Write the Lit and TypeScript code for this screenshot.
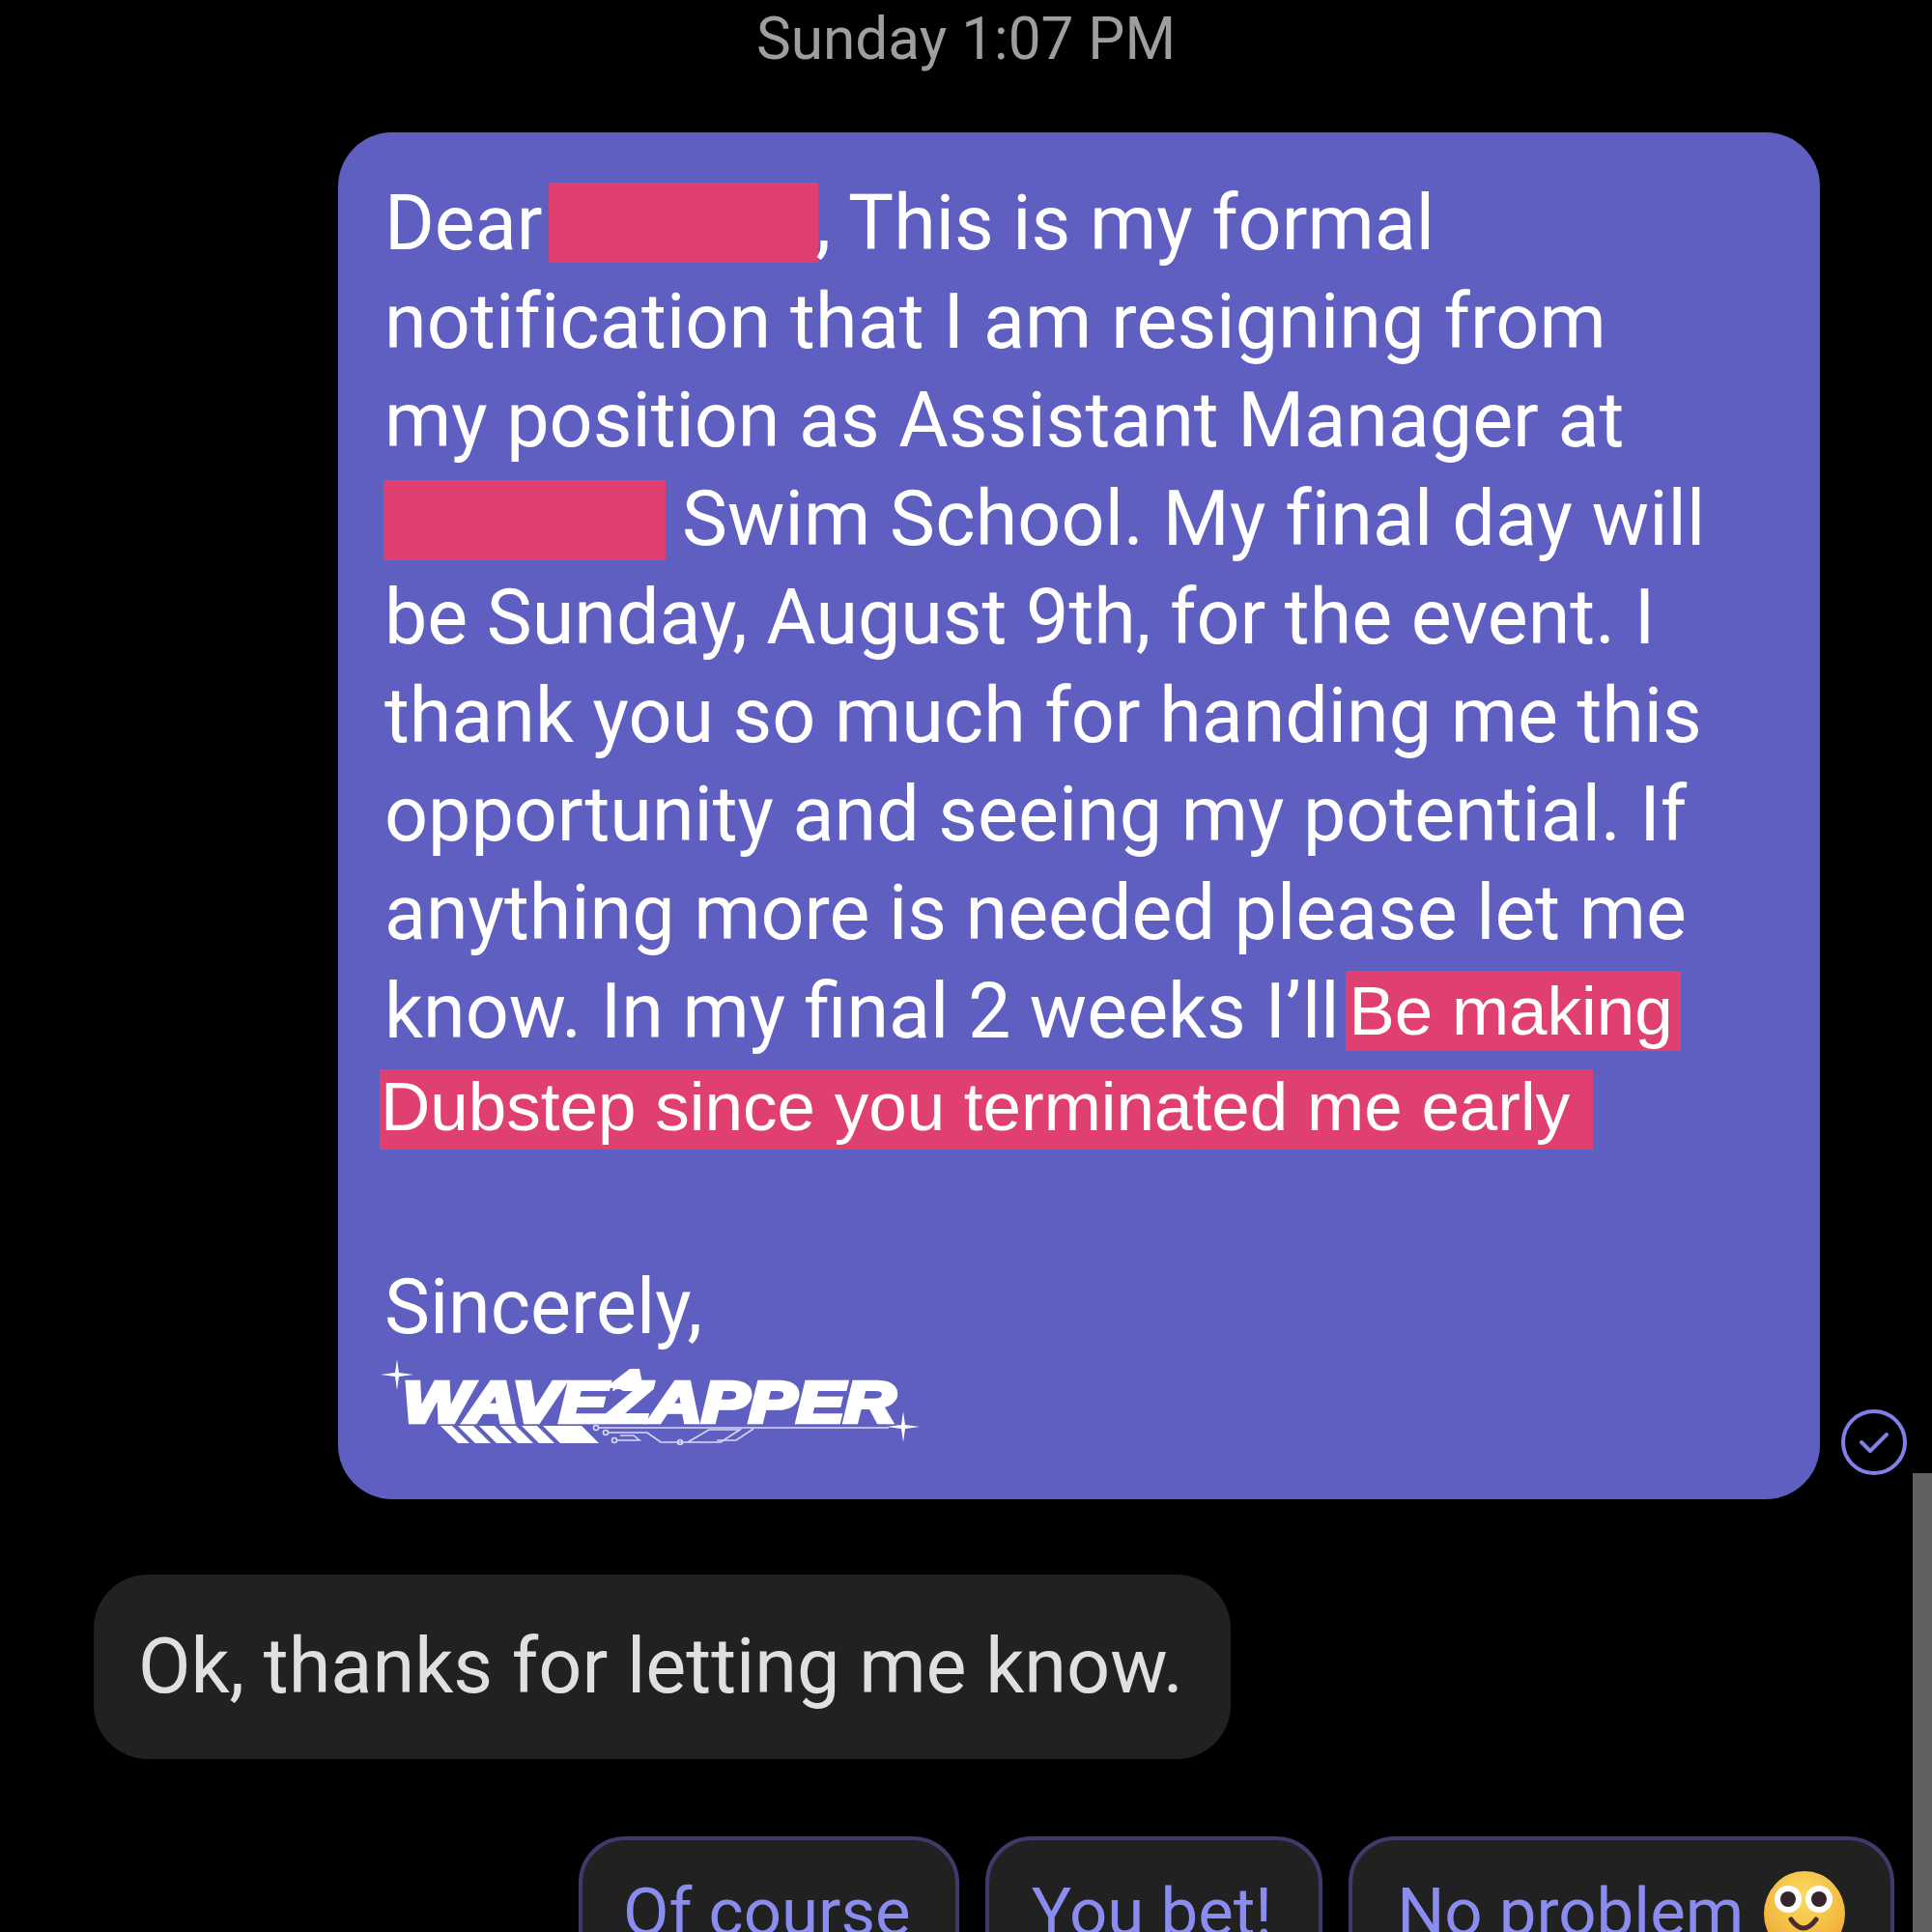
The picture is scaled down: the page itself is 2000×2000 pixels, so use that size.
import { LitElement, html, css, svg } from "lit";
import { customElement } from "lit/decorators.js";

const logo = svg`
  <svg class="logo" width="580" height="100" viewBox="0 0 580 100">
    <g fill="#fff">
      <text class="logo-word" x="27" y="65" textLength="510" lengthAdjust="spacingAndGlyphs">WAVEZAPPER</text>
      <polygon points="236,30 262,10 272,10 276,30" />
      <polygon points="66,69 78,69 96,87 84,87" />
      <polygon points="84,69 100,69 118,87 102,87" />
      <polygon points="106,69 122,69 140,87 124,87" />
      <polygon points="128,69 144,69 162,87 146,87" />
      <polygon points="150,69 166,69 184,87 168,87" />
      <polygon points="172,69 212,69 230,87 190,87" />
      <path d="M21 0 L23 14 L38 16 L23 18 L21 32 L19 18 L4 16 L19 14 Z" />
      <path d="M545 54 L547 68 L562 70 L547 72 L545 86 L543 72 L528 70 L543 68 Z" />
    </g>
    <ellipse cx="250" cy="36" rx="6" ry="5" fill="#5f5fc1" />
    <g fill="none" stroke="#d9d9f6" stroke-width="1.6">
      <path d="M229 71 H530" />
      <circle cx="227" cy="71" r="2.5" />
      <path d="M240 76 H280 L294 86 H322 L344 73 H376 L356 86 H300" />
      <circle cx="237" cy="76" r="2.5" />
      <circle cx="246" cy="84" r="2.5" />
      <path d="M249 84 H272 L266 79 H252" />
      <circle cx="314" cy="86" r="2.5" />
      <path d="M390 72 L372 84 H352" />
    </g>
  </svg>`;

const emoji = svg`
  <svg class="emoji" width="86" height="90" viewBox="0 0 86 90">
    <defs>
      <radialGradient id="face" cx="50%" cy="30%" r="75%">
        <stop offset="0" stop-color="#f8dc5e" />
        <stop offset="0.7" stop-color="#f4b740" />
        <stop offset="1" stop-color="#e99a2e" />
      </radialGradient>
    </defs>
    <ellipse cx="43" cy="44" rx="42" ry="44" fill="url(#face)" />
    <circle cx="26" cy="29" r="14" fill="#fff" />
    <circle cx="58" cy="29" r="14" fill="#fff" />
    <circle cx="26" cy="29" r="8" fill="#35242c" />
    <circle cx="58" cy="29" r="8" fill="#35242c" />
    <path d="M29 50 Q42 68 55 50" fill="none" stroke="#4a2a2c" stroke-width="5" stroke-linecap="round" />
  </svg>`;

@customElement("app-root")
export class AppRoot extends LitElement {
  static styles = css`
    :host {
      display: block;
      position: relative;
      width: 2000px;
      height: 2000px;
      overflow: hidden;
      background: #000;
      font-family: Roboto, sans-serif;
    }
    .page { display: flex; flex-direction: column; }
    .time {
      height: 137px;
      box-sizing: border-box;
      padding-top: 7px;
      text-align: center;
      color: #9e9e9e;
      font-size: 60.3px;
      line-height: 68px;
    }
    .sent-row { display: flex; align-items: flex-end; padding-left: 350px; }
    .sent {
      box-sizing: border-box;
      width: 1534px;
      height: 1415px;
      padding: 42px 0 0 48px;
      background: #5f5fc1;
      border-radius: 56px;
      color: #fff;
      font-size: 79px;
    }
    .line {
      display: flex;
      align-items: center;
      box-sizing: border-box;
      height: 102px;
      padding-top: 2px;
      line-height: 102px;
      white-space: pre;
    }
    .wide { letter-spacing: 0.15px; }
    .red { background: #e0406f; height: 83px; flex: none; margin-top: -2px; }
    .r1 { width: 279px; margin-left: 7px; margin-right: -3px; }
    .r2 { width: 292px; margin: 3px 17px 0 -1px; }
    .paint {
      box-sizing: border-box;
      flex: none;
      font-family: "Liberation Sans", Arial, sans-serif;
      background: #e0406f;
      height: 83px;
      margin-top: -2px;
      line-height: 83px;
      font-size: 71px;
    }
    .p1 { margin-left: 7px; padding-left: 3px; width: 347px; }
    .p2 { margin-left: -5px; padding-left: 1px; width: 1256px; line-height: 77px; }
    .blank { height: 102px; }
    .logo { display: block; margin: 4px 0 0 -8px; }
    .logo-word {
      font-family: "Liberation Sans", sans-serif;
      font-weight: 700;
      font-style: italic;
      font-size: 60px;
      stroke: #fff;
      stroke-width: 4.5px;
    }
    .check { display: block; flex: none; margin: 0 0 25px 22px; }
    .recv {
      box-sizing: border-box;
      margin: 78px 0 0 97px;
      width: 1177px;
      height: 191px;
      padding-left: 46px;
      background: #212121;
      border-radius: 56px;
      color: #e0e0e0;
      font-size: 79.2px;
      line-height: 191px;
      white-space: pre;
    }
    .chips { display: flex; gap: 27px; margin: 80px 0 0 599px; }
    .chip {
      box-sizing: border-box;
      display: flex;
      align-items: flex-start;
      height: 160px;
      padding: 32px 46px 0;
      background: #212121;
      border: 4px solid #3d3b6b;
      border-radius: 48px;
      color: #8b8cf0;
      font-size: 69px;
      line-height: 86px;
      white-space: pre;
    }
    .c1 { padding-left: 42px; }
    .c2 { padding-left: 44px; padding-right: 48px; }
    .emoji { display: block; flex: none; margin: 0 0 0 20px; }
    .scroll {
      position: absolute;
      left: 1980px;
      top: 1525px;
      width: 20px;
      height: 475px;
      background: #606060;
    }
  `;

  render() {
    return html`
      <div class="page">
        <div class="time">Sunday 1:07 PM</div>
        <div class="sent-row">
          <div class="sent">
            <div class="line">Dear<span class="red r1"></span>, This is my formal</div>
            <div class="line wide">notification that I am resigning from</div>
            <div class="line">my position as Assistant Manager at</div>
            <div class="line wide"><span class="red r2"></span>Swim School. My final day will</div>
            <div class="line">be Sunday, August 9th, for the event. I</div>
            <div class="line">thank you so much for handing me this</div>
            <div class="line">opportunity and seeing my potential. If</div>
            <div class="line">anything more is needed please let me</div>
            <div class="line">know. In my final 2 weeks I’ll<span class="paint p1">Be making</span></div>
            <div class="line"><span class="paint p2">Dubstep since you terminated me early</span></div>
            <div class="blank"></div>
            <div class="line">Sincerely,</div>
            ${logo}
          </div>
          <svg class="check" width="68" height="68" viewBox="0 0 68 68" fill="none" stroke="#8280e8" stroke-width="4">
            <circle cx="34" cy="34" r="32" />
            <path d="M21 34 L30 43 L47 26" stroke-linecap="round" stroke-linejoin="round" />
          </svg>
        </div>
        <div class="recv">Ok, thanks for letting me know.</div>
        <div class="chips">
          <div class="chip c1">Of course</div>
          <div class="chip c2">You bet!</div>
          <div class="chip">No problem${emoji}</div>
        </div>
      </div>
      <div class="scroll"></div>
    `;
  }
}
